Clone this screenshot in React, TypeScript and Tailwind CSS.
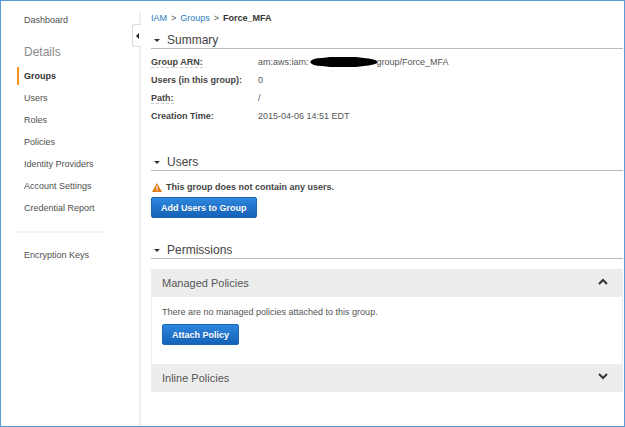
import type { ReactNode } from "react";

const detailLinks = ["Groups", "Users", "Roles", "Policies", "Identity Providers", "Account Settings", "Credential Report"];

function SideLink({ label, active = false }: { label: string; active?: boolean }) {
    return (
        <li className="flex h-[22px] items-center">
            <a
                href="#"
                className={
                    active
                        ? "-ml-[7px] border-l-2 border-[#f7931e] py-[2px] pl-[5px] font-bold text-[#333333]"
                        : "text-[#4f4f4f]"
                }
            >
                {label}
            </a>
        </li>
    );
}

function Sidebar() {
    return (
        <nav className="w-[138px] shrink-0 pl-[23px] pt-2">
            <ul>
                <SideLink label="Dashboard" />
            </ul>
            <h2 className="mt-3 text-[12px] leading-[18px] text-[#888888]">Details</h2>
            <ul className="mt-1">
                {detailLinks.map((label) => (
                    <SideLink key={label} label={label} active={label === "Groups"} />
                ))}
            </ul>
            <hr className="-ml-[7px] mt-3 mr-[33px] border-t-2 border-[#f3f3f3]" />
            <ul className="mt-[11px]">
                <SideLink label="Encryption Keys" />
            </ul>
        </nav>
    );
}

function SectionTitle({ children }: { children: ReactNode }) {
    return (
        <h2 className="border-b border-[#bbbbbb] text-[12px] leading-[16px] text-[#444444]">
            <button type="button" className="flex items-center pl-[3px]">
                <svg className="mr-[7px] h-[3px] w-[6px]" viewBox="0 0 6 3" fill="#333333">
                    <path d="M0 0h6L3 3z" />
                </svg>
                {children}
            </button>
        </h2>
    );
}

function BlueButton({ children }: { children: ReactNode }) {
    return (
        <button
            type="button"
            className="h-[21px] rounded-[2px] border border-[#1a66b8] bg-linear-to-b from-[#2f86de] to-[#1362b8] px-[9px] text-[9px] leading-[12px] font-bold text-white text-shadow-2xs"
        >
            {children}
        </button>
    );
}

function PanelHeader({ title, open = false }: { title: string; open?: boolean }) {
    return (
        <button
            type="button"
            aria-expanded={open}
            className="flex h-7 w-full items-center justify-between bg-[#ededed] pr-[15px] pl-[11px] text-[11px] text-[#555555]"
        >
            {title}
            <svg className="mb-1 h-[7px] w-[10px]" viewBox="0 0 10 7" fill="none" stroke="#333333" strokeWidth="2">
                <path d={open ? "M1 6l4-4 4 4" : "M1 1l4 4 4-4"} />
            </svg>
        </button>
    );
}

export default function App() {
    return (
        <div className="flex min-h-screen border border-[#5b9bd5] bg-white font-['Liberation_Sans',Arial,sans-serif] text-[9px] leading-[14px] text-[#555555]">
            <Sidebar />
            <div className="relative mt-[11px] w-[2px] shrink-0 bg-[#eeeeee]">
                <button
                    type="button"
                    aria-label="Collapse menu"
                    className="absolute top-3 -left-[7px] flex h-[23px] w-[9px] items-center justify-center rounded-l-[3px] border border-r-0 border-[#dddddd] bg-white"
                >
                    <svg className="h-[6px] w-[3px]" viewBox="0 0 3 6" fill="#222222">
                        <path d="M3 0v6L0 3z" />
                    </svg>
                </button>
            </div>
            <main className="min-w-0 flex-1 pt-[10px] pr-px pl-[10px]">
                <nav aria-label="Breadcrumb" className="flex gap-1">
                    <a href="#" className="text-[#2a7ab9]">IAM</a>
                    <span>&gt;</span>
                    <a href="#" className="text-[#2a7ab9]">Groups</a>
                    <span>&gt;</span>
                    <span className="font-bold text-[#333333]">Force_MFA</span>
                </nav>

                <section className="mt-[7px]">
                    <SectionTitle>Summary</SectionTitle>
                    <dl className="mt-[6px] grid grid-cols-[107px_1fr] gap-y-1">
                        <dt className="font-bold text-[#444444]">
                            <span className="border-b border-dashed border-[#cccccc]">Group ARN:</span>
                        </dt>
                        <dd className="flex items-center">
                            am:aws:iam:
                            <svg className="ml-px h-[10px] w-[67px]" viewBox="0 0 67 10">
                                <path d="M0 5Q2 1 12 1L20 0H46L54 1Q64 2 67 4V6Q64 8 54 9L46 10H20L12 9Q2 9 0 5z" />
                            </svg>
                            group/Force_MFA
                        </dd>
                        <dt className="font-bold text-[#444444]">Users (in this group):</dt>
                        <dd>0</dd>
                        <dt className="font-bold text-[#444444]">
                            <span className="border-b border-dashed border-[#cccccc]">Path:</span>
                        </dt>
                        <dd>/</dd>
                        <dt className="font-bold text-[#444444]">Creation Time:</dt>
                        <dd>2015-04-06 14:51 EDT</dd>
                    </dl>
                </section>

                <section className="mt-[31px]">
                    <SectionTitle>Users</SectionTitle>
                    <p className="mt-[9px] mb-[3px] flex items-center gap-1 font-bold text-[#444444]">
                        <svg className="ml-px h-[9px] w-[10px]" viewBox="0 0 10 9">
                            <path d="M5 0L10 9H0z" fill="#e47911" />
                            <path d="M4.4 3h1.2v3H4.4zM4.4 6.8h1.2V8H4.4z" fill="#ffffff" />
                        </svg>
                        This group does not contain any users.
                    </p>
                    <BlueButton>Add Users to Group</BlueButton>
                </section>

                <section className="mt-6">
                    <SectionTitle>Permissions</SectionTitle>
                    <div className="mt-[10px]">
                        <PanelHeader title="Managed Policies" open />
                        <div className="border-x border-[#ededed] px-[10px] pt-2 pb-[19px]">
                            <p className="mb-[5px]">There are no managed policies attached to this group.</p>
                            <BlueButton>Attach Policy</BlueButton>
                        </div>
                        <PanelHeader title="Inline Policies" />
                    </div>
                </section>
            </main>
        </div>
    );
}
